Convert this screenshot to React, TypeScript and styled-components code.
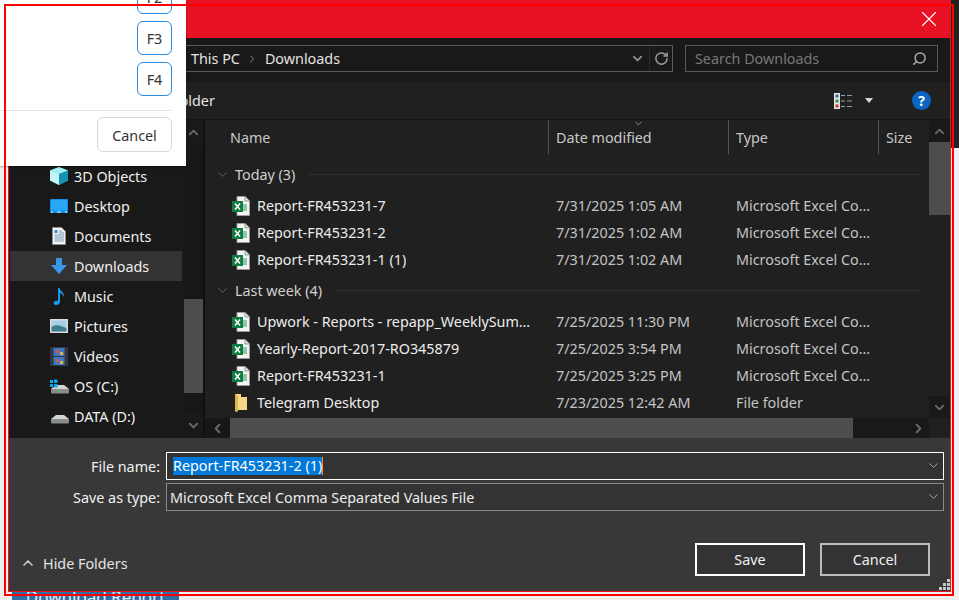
import React from "react";
import styled, { createGlobalStyle } from "styled-components";
import { ChevronDown, ChevronUp, ChevronLeft, ChevronRight, RotateCw, Search, X } from "lucide-react";

const GlobalStyle = createGlobalStyle`
  html, body {
    margin: 0;
    padding: 0;
    background: #f0f0f0;
  }
  * {
    box-sizing: border-box;
  }
`;

const ExcelIcon = () => (
  <svg width="18" height="20" viewBox="0 0 18 20">
    <path d="M5 .5h8l4.5 4.5v14.5H5z" fill="#f4f4f4" stroke="#9a9a9a" />
    <path d="M13 .5V5h4.5" fill="#ddd" stroke="#9a9a9a" />
    <rect x="11" y="8" width="4" height="7" fill="#8fc7a8" />
    <rect x="0" y="5" width="11" height="11" fill="#107c41" />
    <path d="M3 7.5l5 6M8 7.5l-5 6" stroke="#fff" strokeWidth="1.5" />
  </svg>
);

const FolderIcon = () => (
  <svg width="16" height="20" viewBox="0 0 16 20">
    <path d="M2 1h6v3h6v13H5l-1 2-2-1z" fill="#f6d785" />
    <path d="M2 1l3 2v14l-1 2-2-1z" fill="#e0b648" />
  </svg>
);

const CubeIcon = () => (
  <svg width="18" height="18" viewBox="0 0 18 18">
    <path d="M9 0l9 3.5v10L9 18l-9-4.500v-10z" fill="#3cc5da" />
    <path d="M9 0l9 3.500L9 7 0 3.500z" fill="#a6edf4" />
    <path d="M0 3.500L9 7v11L0 13.500z" fill="#c4f2f6" />
    <path d="M9 7l9-3.500v10L9 18z" fill="#1593b5" />
  </svg>
);

const DesktopIcon = () => (
  <svg width="18" height="14" viewBox="0 0 18 14">
    <rect width="18" height="14" rx="1" fill="#0f8fe8" />
    <rect x="1" y="1" width="16" height="10.500" fill="#2ba5f5" />
    <path d="M1 13h2M15 13h2M7 13h4" stroke="#e8f4ff" />
  </svg>
);

const DocumentIcon = () => (
  <svg width="14" height="18" viewBox="0 0 14 18">
    <path d="M.5.500h9l4 4v13H.5z" fill="#f2f2f2" stroke="#8d8d8d" />
    <rect x="2.500" y="3" width="3" height="3" fill="#2f8fd8" />
    <path d="M7 4h3M7 6h5M2.500 8h9.500M2.500 10h9.500M2.500 12h9.500M2.500 14h9.500" stroke="#7b98b5" />
  </svg>
);

const DownloadIcon = () => (
  <svg width="16" height="16" viewBox="0 0 16 16">
    <path d="M5 0h6v7h5l-8 9-8-9h5z" fill="#3a97e8" />
  </svg>
);

const MusicIcon = () => (
  <svg width="12" height="17" viewBox="0 0 12 17">
    <path d="M5 0h1.500c.5 3 5 4 4.500 9-1-2-2.500-3.500-4-4v9c0 2-2 3-4 3s-3-1.500-2-3 3-1.500 4-1z" fill="#1c97ea" />
  </svg>
);

const PictureIcon = () => (
  <svg width="18" height="14" viewBox="0 0 18 14">
    <rect width="18" height="14" fill="#dcdcdc" />
    <rect x="1.500" y="1.500" width="15" height="11" fill="#a5cfe6" />
    <path d="M1.500 8c4-3 8-2 15 1v3.500h-15z" fill="#3e7f8c" />
  </svg>
);

const VideoIcon = () => (
  <svg width="18" height="19" viewBox="0 0 18 19">
    <rect width="18" height="19" fill="#33363a" />
    <rect x="3.500" y="1" width="11" height="8" fill="#3c78c8" />
    <rect x="3.500" y="10" width="11" height="8" fill="#3c78c8" />
    <path d="M6 3h3v3H6zM6 12h3v3H6z" fill="#d65a32" />
    <path d="M10 5h3v3h-3zM10 14h3v3h-3z" fill="#e3b23c" />
  </svg>
);

const DriveIcon = ({ system }: { system?: boolean }) => (
  <svg width="19" height="15" viewBox="0 0 19 15">
    <path d="M1 10l5-4h8l5 4z" fill="#d5d5d5" />
    <path d="M1 10h18v3.500a1 1 0 0 1-1 1H2a1 1 0 0 1-1-1z" fill="#8b8b8b" />
    <rect x="7" y="11.500" width="2" height="1.500" fill="#33c26a" />
    {system && <path d="M0 1h3v3H0zM4 .5h3.500V4H4zM0 5h3v3H0zM4 5h3.500v3.500H4z" fill="#10a5e8" />}
  </svg>
);

const ViewIcon = () => (
  <svg width="18" height="16" viewBox="0 0 18 16">
    <rect width="6" height="16" fill="#e6e6e6" />
    <rect x="1.500" y="1.500" width="3" height="3" fill="#2e6d9e" />
    <rect x="1.500" y="6.500" width="3" height="3" fill="#3a8a5a" />
    <rect x="1.500" y="11.500" width="3" height="3" fill="#c0392b" />
    <path d="M7 2.500h4M13 2.500h5M7 8h4M13 8h5M7 13.500h4M13 13.500h5" stroke="#9a9a9a" />
  </svg>
);

const GripIcon = () => (
  <svg width="12" height="12" viewBox="0 0 12 12">
    <path d="M9 0h3v3H9zM5 4h3v3H5zM9 4h3v3H9zM1 8h3v3H1zM5 8h3v3H5zM9 8h3v3H9z" fill="#c8c8c8" />
  </svg>
);

const folders = [
  { name: "3D Objects", icon: <CubeIcon /> },
  { name: "Desktop", icon: <DesktopIcon /> },
  { name: "Documents", icon: <DocumentIcon /> },
  { name: "Downloads", icon: <DownloadIcon />, active: true },
  { name: "Music", icon: <MusicIcon /> },
  { name: "Pictures", icon: <PictureIcon /> },
  { name: "Videos", icon: <VideoIcon /> },
  { name: "OS (C:)", icon: <DriveIcon system /> },
  { name: "DATA (D:)", icon: <DriveIcon /> },
];

const excelType = "Microsoft Excel Comma Separated Values File";

const groups = [
  {
    title: "Today (3)",
    files: [
      { name: "Report-FR453231-7", date: "7/31/2025 1:05 AM", type: excelType },
      { name: "Report-FR453231-2", date: "7/31/2025 1:02 AM", type: excelType },
      { name: "Report-FR453231-1 (1)", date: "7/31/2025 1:02 AM", type: excelType },
    ],
  },
  {
    title: "Last week (4)",
    files: [
      { name: "Upwork - Reports - repapp_WeeklySummary-2025", date: "7/25/2025 11:30 PM", type: excelType },
      { name: "Yearly-Report-2017-RO345879", date: "7/25/2025 3:54 PM", type: excelType },
      { name: "Report-FR453231-1", date: "7/25/2025 3:25 PM", type: excelType },
      { name: "Telegram Desktop", date: "7/23/2025 12:42 AM", type: "File folder", folder: true },
    ],
  },
];

function App() {
  return (
    <Page>
      <GlobalStyle />
      <Dialog>
        <TitleBar>
          <X size={26} strokeWidth={1} color="#fff" />
        </TitleBar>

        <AddressBar>
          <AddressBox>
            <Crumb>This PC</Crumb>
            <ChevronRight size={12} color="#8a8a8a" />
            <Crumb>Downloads</Crumb>
            <AddressTools>
              <ChevronDown size={15} strokeWidth={2.4} color="#9a9a9a" />
              <RefreshCell>
                <RotateCw size={15} strokeWidth={2.4} color="#9a9a9a" />
              </RefreshCell>
            </AddressTools>
          </AddressBox>
          <SearchBox>
            <span>Search Downloads</span>
            <Search size={15} strokeWidth={2.4} color="#a8a8a8" style={{ transform: "scaleX(-1)" }} />
          </SearchBox>
        </AddressBar>

        <Toolbar>
          <NewFolder>New folder</NewFolder>
          <ToolbarRight>
            <ViewIcon />
            <Caret />
            <HelpBadge>?</HelpBadge>
          </ToolbarRight>
        </Toolbar>

        <Main>
          <Sidebar>
            <FolderList>
              {folders.map((folder) => (
                <FolderRow key={folder.name} $active={folder.active}>
                  <FolderGlyph>{folder.icon}</FolderGlyph>
                  {folder.name}
                </FolderRow>
              ))}
            </FolderList>
            <VScroll>
              <ArrowCell>
                <ChevronUp size={15} strokeWidth={3} color="#6a6a6a" />
              </ArrowCell>
              <SideTrack>
                <SideThumb />
              </SideTrack>
              <ArrowCell>
                <ChevronDown size={15} strokeWidth={3} color="#6a6a6a" />
              </ArrowCell>
            </VScroll>
          </Sidebar>

          <ListPanel>
            <ListBody>
              <ListColumn>
                <HeaderRow>
                  <HeaderCell>Name</HeaderCell>
                  <HeaderCell $line>
                    Date modified
                    <SortMark>
                      <ChevronDown size={11} color="#9a9a9a" />
                    </SortMark>
                  </HeaderCell>
                  <HeaderCell $line>Type</HeaderCell>
                  <HeaderCell $line>Size</HeaderCell>
                </HeaderRow>
                {groups.map((group) => (
                  <Group key={group.title}>
                    <GroupTitle>
                      <ChevronDown size={15} strokeWidth={1.2} color="#7a7a7a" />
                      <span>{group.title}</span>
                      <GroupLine />
                    </GroupTitle>
                    {group.files.map((file) => (
                      <FileRow key={file.name}>
                        <FileName>
                          <FileGlyph>{file.folder ? <FolderIcon /> : <ExcelIcon />}</FileGlyph>
                          <Ellipsis>{file.name}</Ellipsis>
                        </FileName>
                        <FileMeta>{file.date}</FileMeta>
                        <FileMeta>{file.type}</FileMeta>
                      </FileRow>
                    ))}
                  </Group>
                ))}
              </ListColumn>
              <ListScroll>
                <ArrowCell $short>
                  <ChevronUp size={15} strokeWidth={3} color="#6a6a6a" />
                </ArrowCell>
                <ListTrack>
                  <ListThumb />
                </ListTrack>
                <ArrowCell $short>
                  <ChevronDown size={15} strokeWidth={3} color="#6a6a6a" />
                </ArrowCell>
              </ListScroll>
            </ListBody>
            <HScroll>
              <HArrow>
                <ChevronLeft size={15} strokeWidth={3} color="#6a6a6a" />
              </HArrow>
              <HThumb />
              <HTrack>
                <ChevronRight size={15} strokeWidth={3} color="#6a6a6a" />
              </HTrack>
              <HCorner />
            </HScroll>
          </ListPanel>
        </Main>

        <BottomPanel>
          <Field>
            <FieldLabel>File name:</FieldLabel>
            <FieldBox $focus>
              <Selected>Report-FR453231-2 (1)</Selected>
              <Caretline />
              <FieldArrow>
                <ChevronDown size={15} strokeWidth={1.2} color="#c8c8c8" />
              </FieldArrow>
            </FieldBox>
          </Field>
          <Field>
            <FieldLabel>Save as type:</FieldLabel>
            <FieldBox>
              {excelType}
              <FieldArrow>
                <ChevronDown size={15} strokeWidth={1.2} color="#c8c8c8" />
              </FieldArrow>
            </FieldBox>
          </Field>
          <FooterRow>
            <HideFolders>
              <ChevronUp size={16} strokeWidth={2.5} color="#c8c8c8" />
              Hide Folders
            </HideFolders>
            <ActionButton $primary>Save</ActionButton>
            <ActionButton>Cancel</ActionButton>
          </FooterRow>
          <Grip>
            <GripIcon />
          </Grip>
        </BottomPanel>
      </Dialog>

      <DownloadButton>Download Report</DownloadButton>

      <Popover>
        <KeyList>
          <KeyButton>F2</KeyButton>
          <KeyButton>F3</KeyButton>
          <KeyButton>F4</KeyButton>
        </KeyList>
        <PopoverDivider />
        <PopoverFooter>
          <CancelButton>Cancel</CancelButton>
        </PopoverFooter>
      </Popover>

      <Highlight />
    </Page>
  );
}

const Page = styled.div`
  position: relative;
  width: 959px;
  height: 600px;
  overflow: hidden;
  padding-left: 8px;
  background: linear-gradient(#222 0 148px, #f0f0f0 148px);
  font-family: "Noto Sans", "Open Sans", sans-serif;
  font-size: 14.35px;
  color: #e8e8e8;
`;

const Dialog = styled.div`
  position: relative;
  z-index: 1;
  display: flex;
  flex-direction: column;
  width: 943px;
  height: 592px;
  border: 1px solid #e81224;
  border-top: none;
  background: #191919;
`;

const TitleBar = styled.div`
  display: flex;
  align-items: center;
  justify-content: flex-end;
  flex: 0 0 38px;
  padding-right: 8px;
  background: #e81224;
`;

const AddressBar = styled.div`
  display: flex;
  gap: 12px;
  flex: 0 0 44px;
  padding: 7px 12px 10px 51px;
  background: #191919;
`;

const AddressBox = styled.div`
  display: flex;
  align-items: center;
  gap: 6.5px;
  flex: 1;
  padding-left: 130px;
  border: 1px solid #5a5a5a;
`;

const Crumb = styled.span`
  color: #e4e4e4;
`;

const AddressTools = styled.div`
  display: flex;
  align-items: center;
  height: 100%;
  margin-left: auto;
  padding-right: 3px;
`;

const RefreshCell = styled.div`
  display: flex;
  align-items: center;
  height: 100%;
  margin-left: 4px;
  padding-left: 4px;
  border-left: 1px solid #2a2a2a;
`;

const SearchBox = styled.div`
  display: flex;
  align-items: center;
  justify-content: space-between;
  flex: 0 0 253px;
  padding: 0 10px 0 9px;
  border: 1px solid #5a5a5a;
  color: #777;
`;

const Toolbar = styled.div`
  display: flex;
  align-items: center;
  flex: 0 0 38px;
  padding: 0 19px 0 132px;
  background: #202020;
  border-bottom: 1px solid #151515;
`;

const NewFolder = styled.span`
  color: #e4e4e4;
`;

const ToolbarRight = styled.div`
  display: flex;
  align-items: center;
  margin-left: auto;
`;

const Caret = styled.span`
  width: 0;
  height: 0;
  margin: 0 39px 0 13px;
  border-left: 4px solid transparent;
  border-right: 4px solid transparent;
  border-top: 5px solid #d8d8d8;
`;

const HelpBadge = styled.span`
  display: flex;
  align-items: center;
  justify-content: center;
  width: 19px;
  height: 19px;
  border-radius: 50%;
  background: #0a66c2;
  color: #fff;
  font-weight: 700;
  font-size: 14px;
`;

const Main = styled.div`
  display: flex;
  flex: 0 0 318px;
  min-height: 0;
`;

const Sidebar = styled.div`
  display: flex;
  flex: 0 0 196px;
  border-right: 2px solid #101010;
  background: #191919;
`;

const FolderList = styled.div`
  flex: 1;
  padding: 41px 2px 0 1px;
  overflow: hidden;
`;

const FolderRow = styled.div<{ $active?: boolean }>`
  display: flex;
  align-items: center;
  height: 30px;
  background: ${(p) => (p.$active ? "#333" : "transparent")};
  color: #f0f0f0;
`;

const FolderGlyph = styled.span`
  display: flex;
  align-items: center;
  justify-content: center;
  flex: 0 0 20px;
  margin: 0 5px 0 39px;
`;

const VScroll = styled.div`
  display: flex;
  flex-direction: column;
  flex: 0 0 19px;
  background: #171717;
`;

const ArrowCell = styled.div<{ $short?: boolean }>`
  display: flex;
  align-items: center;
  justify-content: center;
  flex: 0 0 ${(p) => (p.$short ? "22px" : "25px")};
  background: #191919;
`;

const SideTrack = styled.div`
  flex: 1;
  padding-top: 154px;
`;

const SideThumb = styled.div`
  height: 94px;
  background: #4d4d4d;
`;

const ListPanel = styled.div`
  display: flex;
  flex-direction: column;
  flex: 1;
  min-width: 0;
  background: #202020;
`;

const ListBody = styled.div`
  display: flex;
  flex: 1;
  min-height: 0;
`;

const ListColumn = styled.div`
  flex: 1;
  min-width: 0;
  overflow: hidden;
`;

const HeaderRow = styled.div`
  display: grid;
  grid-template-columns: 318px 180px 150px 1fr;
  height: 34px;
  margin-left: 25px;
`;

const HeaderCell = styled.div<{ $line?: boolean }>`
  position: relative;
  display: flex;
  align-items: center;
  padding-left: ${(p) => (p.$line ? "7px" : "0")};
  border-left: ${(p) => (p.$line ? "1px solid #555" : "none")};
  color: #c8c8c8;
  white-space: nowrap;
`;

const SortMark = styled.span`
  position: absolute;
  top: -2px;
  left: 84px;
  display: flex;
`;

const Group = styled.div`
  padding-top: 7px;

  & + & {
    padding-top: 4px;
  }
`;

const GroupTitle = styled.div`
  display: flex;
  align-items: center;
  gap: 5px;
  height: 26px;
  margin: 0 9px 5px 10px;
  color: #d0d0d0;
`;

const GroupLine = styled.div`
  flex: 1;
  height: 1px;
  margin-left: 8px;
  background: #303030;
`;

const FileRow = styled.div`
  display: grid;
  grid-template-columns: 319px 180px 148px;
  align-items: center;
  height: 27px;
  margin-left: 25px;
`;

const FileName = styled.div`
  display: flex;
  align-items: center;
  min-width: 0;
  padding-right: 6px;
  color: #ececec;
`;

const FileGlyph = styled.span`
  display: flex;
  justify-content: center;
  flex: 0 0 22px;
  margin-right: 5px;
`;

const Ellipsis = styled.span`
  overflow: hidden;
  white-space: nowrap;
  text-overflow: ellipsis;
`;

const FileMeta = styled.div`
  overflow: hidden;
  padding-left: 7px;
  white-space: nowrap;
  text-overflow: ellipsis;
  color: #c4c4c4;
`;

const ListScroll = styled.div`
  display: flex;
  flex-direction: column;
  flex: 0 0 21px;
  background: #202020;
`;

const ListTrack = styled.div`
  flex: 1;
  padding-top: 0;
`;

const ListThumb = styled.div`
  height: 73px;
  background: #4d4d4d;
`;

const HScroll = styled.div`
  display: flex;
  flex: 0 0 20px;
  background: #171717;
`;

const HArrow = styled.div`
  display: flex;
  align-items: center;
  justify-content: center;
  flex: 0 0 25px;
`;

const HThumb = styled.div`
  flex: 0 0 623px;
  background: #4d4d4d;
`;

const HTrack = styled.div`
  display: flex;
  align-items: center;
  justify-content: flex-end;
  flex: 1;
  padding-right: 3px;
  background: #191919;
`;

const HCorner = styled.div`
  flex: 0 0 21px;
  background: #202020;
`;

const BottomPanel = styled.div`
  position: relative;
  display: flex;
  flex-direction: column;
  gap: 3px;
  flex: 1;
  padding: 14px 6px 0 0;
  background: #383838;
`;

const Field = styled.div`
  display: flex;
  align-items: center;
  gap: 6px;
  height: 28px;
`;

const FieldLabel = styled.div`
  flex: 0 0 151px;
  text-align: right;
  color: #f0f0f0;
`;

const FieldBox = styled.div<{ $focus?: boolean }>`
  position: relative;
  display: flex;
  align-items: center;
  flex: 1;
  height: 100%;
  border: 1px solid ${(p) => (p.$focus ? "#fff" : "#8a8a8a")};
  background: #333;
  color: #ececec;
  padding-left: ${(p) => (p.$focus ? "6px" : "3px")};
`;

const Selected = styled.span`
  height: 18px;
  line-height: 18px;
  background: #0078d7;
  color: #fff;
`;

const Caretline = styled.span`
  width: 1px;
  height: 18px;
  background: #ff8c1a;
`;

const FieldArrow = styled.span`
  position: absolute;
  right: 2px;
  top: 5px;
  display: flex;
`;

const FooterRow = styled.div`
  display: flex;
  align-items: center;
  gap: 15px;
  margin-top: 29px;
  padding-right: 14px;
`;

const HideFolders = styled.div`
  display: flex;
  align-items: center;
  gap: 7px;
  margin: 7px auto 0 0;
  padding-left: 11px;
  color: #e4e4e4;
`;

const ActionButton = styled.button<{ $primary?: boolean }>`
  width: 110px;
  height: 33px;
  border: 2px solid ${(p) => (p.$primary ? "#fff" : "#bcbcbc")};
  background: #333;
  color: #f0f0f0;
  font: inherit;
`;

const Grip = styled.span`
  position: absolute;
  right: 0;
  bottom: 0;
  display: flex;
`;

const DownloadButton = styled.div`
  width: 167px;
  height: 20px;
  margin: -6px 0 0 4px;
  text-align: center;
  line-height: 22px;
  font-size: 17px;
  background: #2f6ea5;
  color: #e8eef4;
`;

const Popover = styled.div`
  position: absolute;
  z-index: 2;
  top: 0;
  left: 0;
  display: flex;
  flex-direction: column;
  justify-content: flex-end;
  width: 186px;
  height: 166px;
  padding-bottom: 14px;
  overflow: hidden;
  background: #fff;
  box-shadow: 0 1px 2px rgba(0, 0, 0, 0.35);
  color: #333;
`;

const KeyList = styled.div`
  display: flex;
  flex-direction: column;
  flex-shrink: 0;
  align-items: flex-end;
  gap: 7px;
  padding-right: 14px;
`;

const KeyButton = styled.div`
  display: flex;
  align-items: center;
  justify-content: center;
  flex: 0 0 34px;
  width: 35px;
  padding-top: 1px;
  border: 1px solid #2b8ae0;
  border-radius: 6px;
`;

const PopoverDivider = styled.div`
  flex: 0 0 1px;
  margin: 14px 14px 6px 0;
  background: #e4e4e4;
`;

const PopoverFooter = styled.div`
  display: flex;
  flex-shrink: 0;
  justify-content: flex-end;
  padding-right: 14px;
`;

const CancelButton = styled.div`
  display: flex;
  align-items: center;
  justify-content: center;
  width: 75px;
  height: 35px;
  padding-top: 1px;
  border: 1px solid #d8d8d8;
  border-radius: 6px;
`;

const Highlight = styled.div`
  position: absolute;
  z-index: 3;
  top: 4px;
  left: 4px;
  width: 950px;
  height: 592px;
  border: 2px solid #ff0000;
  pointer-events: none;
`;

export default App;
